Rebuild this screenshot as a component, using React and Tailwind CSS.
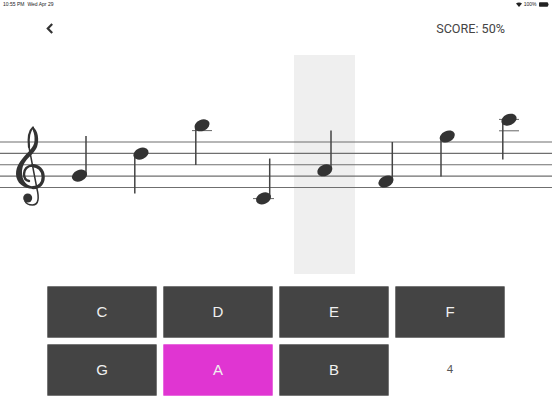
const FONT = "font-['Liberation_Sans',Arial,sans-serif]";

const STAFF_LINES = [142, 153.4, 164.8, 176.1, 187.5];

const NOTES = [
  { x: 79.5, y: 175.6, stemX: 86, stemTop: 136, stemBottom: 175 },
  { x: 141, y: 153.6, stemX: 134.8, stemTop: 153, stemBottom: 193.5 },
  { x: 202, y: 125.3, stemX: 195.8, stemTop: 125, stemBottom: 165, ledgers: [{ y: 130.6, x1: 192, x2: 212 }] },
  { x: 263.5, y: 198.4, stemX: 269.7, stemTop: 158.5, stemBottom: 198, ledgers: [{ y: 198.6, x1: 253, x2: 274 }] },
  { x: 324.8, y: 170.3, stemX: 331, stemTop: 130.5, stemBottom: 170 },
  { x: 386, y: 181.5, stemX: 392.3, stemTop: 142, stemBottom: 181 },
  { x: 447.3, y: 136.5, stemX: 441, stemTop: 136, stemBottom: 176.5 },
  {
    x: 509,
    y: 119.7,
    stemX: 502.8,
    stemTop: 120,
    stemBottom: 159.5,
    ledgers: [
      { y: 119.4, x1: 499, x2: 519 },
      { y: 130.8, x1: 499, x2: 519 },
    ],
  },
];

const ROWS = [
  [
    { label: "C" },
    { label: "D" },
    { label: "E" },
    { label: "F" },
  ],
  [
    { label: "G" },
    { label: "A", active: true },
    { label: "B" },
  ],
];

function TrebleClef() {
  return (
    <g>
      <path
        d="M33 127 C38 130 39.5 140 37 147 C35 152 30 156 26.5 160 C23 164 21.5 169 22 174 C22.5 181 27 186 33 186.5 L33 188.8 C24 188.8 16 183 16 174 C16 166 21 160 25 155.5 C29 151 34 147 34.5 141 C34.8 136 34 133 33 131 Z"
        fill="#333"
      />
      <g fill="none" stroke="#333" strokeLinecap="round">
        <path d="M33 187.6 C39.5 187.6 43.2 183 43.2 177 C43.2 170 38 165.6 32.5 165.6" strokeWidth="3.2" />
        <path d="M32.5 165.6 C27 165.6 24 169.5 24 174 C24 178 26 180.5 29 181" strokeWidth="2.4" />
        <path d="M33 127.5 C29 131 28 138 29 147" strokeWidth="2.2" />
        <path d="M29 147 L37 189 C39 197 39 205 32.5 205 C28.5 205 26 203.5 25 201" strokeWidth="1.5" />
      </g>
      <circle cx="27.7" cy="198" r="4.5" fill="#333" />
    </g>
  );
}

function Note({ note }) {
  return (
    <g>
      {note.ledgers?.map((l) => (
        <line key={l.y} x1={l.x1} x2={l.x2} y1={l.y} y2={l.y} stroke="#555" strokeWidth="0.9" />
      ))}
      <line x1={note.stemX} x2={note.stemX} y1={note.stemTop} y2={note.stemBottom} stroke="#444" strokeWidth="1.5" />
      <ellipse cx={note.x} cy={note.y} rx="7.9" ry="5.6" fill="#333" transform={`rotate(-24 ${note.x} ${note.y})`} />
    </g>
  );
}

function NoteButton({ label, active }) {
  return (
    <button
      type="button"
      className={`flex h-[52px] items-center justify-center rounded-[1px] border-[0.5px] text-[15px] text-[#f0f0f0] ${
        active ? "border-[#e86ade] bg-[#e035d2]" : "border-[#777] bg-[#444]"
      }`}
    >
      {label}
    </button>
  );
}

export default function App() {
  return (
    <main className={`flex h-[414px] w-[552px] flex-col overflow-hidden bg-white ${FONT}`}>
      <div className="flex h-[8px] items-center justify-between pl-[3px] pr-[3px] pt-[1px] text-[5px] leading-none text-[#222]">
        <div className="flex gap-[3px]">
          <span>10:55 PM</span>
          <span>Wed Apr 29</span>
        </div>
        <div className="flex items-center gap-[1.5px]">
          <svg width="6" height="5" viewBox="0 0 6 5">
            <path d="M0 1.6 C1.6 0 4.4 0 6 1.6 L3 5 Z" fill="#222" />
          </svg>
          <span>100%</span>
          <svg width="10" height="5" viewBox="0 0 10 5" className="ml-[1px]">
            <rect x="0" y="0.3" width="9" height="4.4" rx="0.8" fill="#222" />
            <rect x="9.3" y="1.6" width="0.7" height="1.8" fill="#555" />
          </svg>
        </div>
      </div>

      <header className="mb-[6px] flex h-[41px] items-center justify-between pl-[46px] pr-[47px]">
        <svg width="8" height="11" viewBox="0 0 8 11">
          <path d="M6.2 1 L1.8 5.5 L6.2 10" fill="none" stroke="#333" strokeWidth="2.2" />
        </svg>
        <span className="pt-[2px] font-['Roboto',sans-serif] text-[12.6px] text-[#444]">SCORE: 50%</span>
      </header>

      <section className="relative h-[231px] w-full">
        <div className="absolute left-[294px] top-0 h-[219px] w-[61px] bg-[#efefef]" />
        <svg className="absolute inset-0" width="552" height="231" viewBox="0 55 552 231">
          {STAFF_LINES.map((y) => (
            <line key={y} x1="0" x2="552" y1={y} y2={y} stroke="#6f6f6f" strokeWidth="1.1" />
          ))}
          <TrebleClef />
          {NOTES.map((note) => (
            <Note key={note.x} note={note} />
          ))}
        </svg>
      </section>

      <div className="ml-[47px] flex w-[458px] flex-col gap-[6px]">
        {ROWS.map((row, i) => (
          <div key={i} className="grid grid-cols-4 gap-[6px]">
            {row.map((b) => (
              <NoteButton key={b.label} label={b.label} active={b.active} />
            ))}
            {i === 1 ? (
              <div className="flex items-center justify-center text-[11.5px] text-[#555]">4</div>
            ) : null}
          </div>
        ))}
      </div>
    </main>
  );
}
